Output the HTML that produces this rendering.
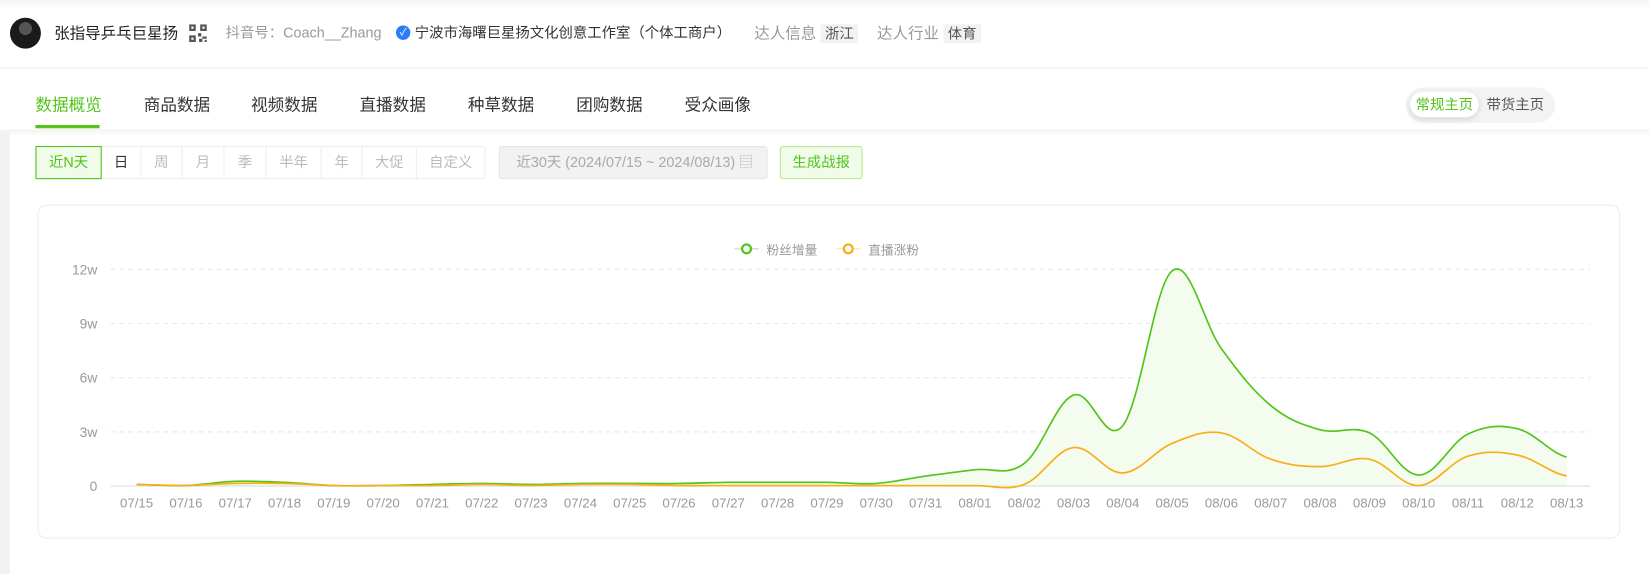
<!DOCTYPE html>
<html><head><meta charset="utf-8">
<style>
*{margin:0;padding:0;box-sizing:border-box}
body{width:1649px;height:540px;background:#fff;font-family:"Liberation Sans","Noto Sans CJK SC",sans-serif;position:relative;overflow:hidden;color:#333}
#w{position:absolute;left:0;top:0;width:1568px;height:514px;transform:scale(1.106);transform-origin:0 0}
.top{position:absolute;left:0;top:0;width:1568px;height:62px;border-bottom:1px solid #eee;background:linear-gradient(#f4f4f4,#fff 8px)}
.avatar{position:absolute;left:9px;top:16px;width:28px;height:28px;border-radius:50%;background:radial-gradient(circle at 50% 35%,#555 0 25%,#1a1a1a 26%);}
.t{position:absolute;top:21px;font-size:14px;line-height:18px;white-space:nowrap}
.tag{background:#f2f2f2;padding:1px 4px;color:#555;font-size:13px}
.tabs{position:absolute;top:84px;font-size:15px;color:#333}
.tabs span{position:absolute;white-space:nowrap}
.ul{position:absolute;left:32px;top:113px;width:58px;height:3px;background:#52c41a}
.sw{position:absolute;left:1271px;top:79px;width:135px;height:32px;border-radius:16px;background:#f2f3f5}
.sw .on{position:absolute;left:4px;top:4px;width:62px;height:23px;border-radius:12px;background:#fff;box-shadow:0 2px 6px rgba(0,0,0,.12);color:#52c41a;font-size:13px;text-align:center;line-height:23px}
.sw .off{position:absolute;left:73px;top:4px;font-size:13px;color:#555;line-height:23px}
.shadow{position:absolute;left:0;top:117px;width:1568px;height:6px;background:linear-gradient(#f3f3f3,#fff)}
.lstrip{position:absolute;left:0;top:119px;width:9px;height:400px;background:#f2f2f2}
.seg{position:absolute;left:32px;top:132px;height:30px;border:1px solid #eee;border-radius:3px;display:flex;font-size:13px;color:#bbb}
.seg div{height:28px;line-height:28px;text-align:center;border-right:1px solid #eee}
.date{position:absolute;left:451px;top:132px;width:243px;height:30px;background:#f2f2f2;border:1px solid #e6e6e6;border-radius:3px;font-size:13px;color:#aaa;line-height:28px;padding-left:15px}
.gen{position:absolute;left:705px;top:132px;width:75px;height:30px;background:#f0fbe9;border:1px solid #b7eb8f;border-radius:3px;color:#52c41a;font-size:13px;line-height:28px;text-align:center}
.card{position:absolute;left:34px;top:185px;width:1431px;height:302px;border:1px solid #eee;border-radius:8px}
svg text{font-family:"Liberation Sans","Noto Sans CJK SC",sans-serif}
</style></head><body>
<div id="w">
<div class="top"></div>
<div class="avatar"></div>
<div class="t" style="left:49px;color:#222">张指导乒乓巨星扬</div>
<svg style="position:absolute;left:171px;top:22px" width="16" height="16" viewBox="0 0 16 16"><g fill="#555"><rect x="0" y="0" width="6" height="6"/><rect x="10" y="0" width="6" height="6"/><rect x="0" y="10" width="6" height="6"/><rect x="8" y="8" width="3" height="3"/><rect x="12" y="11" width="4" height="2"/><rect x="9" y="13" width="3" height="3"/><rect x="14" y="14" width="2" height="2"/></g><g fill="#fff"><rect x="2" y="2" width="2" height="2"/><rect x="12" y="2" width="2" height="2"/><rect x="2" y="12" width="2" height="2"/></g></svg>
<div class="t" style="left:204px;color:#999;font-size:13px">抖音号：Coach__Zhang</div>
<div class="t" style="left:358px;top:23px;width:13px;height:13px;border-radius:50%;background:#2b7cf6;color:#fff;font-size:9px;line-height:13px;text-align:center">✓</div>
<div class="t" style="left:375px;color:#333;font-size:13px">宁波市海曙巨星扬文化创意工作室（个体工商户）</div>
<div class="t" style="left:682px;color:#999">达人信息 <span class="tag">浙江</span></div>
<div class="t" style="left:793px;color:#999">达人行业 <span class="tag">体育</span></div>

<div class="tabs">
<span style="left:32px;color:#52c41a">数据概览</span><span style="left:130px">商品数据</span><span style="left:227px">视频数据</span><span style="left:325px">直播数据</span><span style="left:423px">种草数据</span><span style="left:521px">团购数据</span><span style="left:619px">受众画像</span>
</div>
<div class="ul"></div>
<div class="sw"><div class="on">常规主页</div><div class="off">带货主页</div></div>
<div class="shadow"></div>
<div class="lstrip"></div>

<div class="seg">
<div style="width:60px;background:#f0fbe9;color:#52c41a;border:1px solid #52c41a;margin:-1px 0 -1px -1px;height:30px;line-height:28px">近N天</div>
<div style="width:36px;color:#333">日</div><div style="width:37px">周</div><div style="width:38px">月</div><div style="width:38px">季</div><div style="width:50px">半年</div><div style="width:37px">年</div><div style="width:49px">大促</div><div style="width:61px;border-right:none">自定义</div>
</div>
<div class="date">近30天 (2024/07/15 ~ 2024/08/13)<span style="position:absolute;right:12px;top:0;color:#bbb">▤</span></div>
<div class="gen">生成战报</div>

<div class="card"></div>
<svg id="ch" width="1568" height="514" style="position:absolute;left:0;top:0">
<g stroke="#e8e8e8" stroke-dasharray="4,4">
<line x1="100" x2="1438" y1="243.5" y2="243.5"/><line x1="100" x2="1438" y1="292.5" y2="292.5"/><line x1="100" x2="1438" y1="341.5" y2="341.5"/><line x1="100" x2="1438" y1="390.5" y2="390.5"/>
</g>
<line x1="100" x2="1438" y1="439.5" y2="439.5" stroke="#ddd"/>
<g font-size="12.5" fill="#999" text-anchor="end">
<text x="88" y="248">12w</text><text x="88" y="297">9w</text><text x="88" y="346">6w</text><text x="88" y="395">3w</text><text x="88" y="444">0</text>
</g>
<g id="xl" font-size="12" fill="#999" text-anchor="middle"></g>
<g font-size="11.5" fill="#999">
<line x1="664" x2="686" y1="225" y2="225" stroke="#b7e59a"/><circle cx="675" cy="225" r="4" fill="#fff" stroke="#52c41a" stroke-width="2"/>
<text x="693" y="230">粉丝增量</text>
<line x1="756" x2="778" y1="225" y2="225" stroke="#ffe0a0"/><circle cx="767" cy="225" r="4" fill="#fff" stroke="#faad14" stroke-width="2"/>
<text x="785" y="230">直播涨粉</text>
</g>
<path id="ga" fill="#f4fbef" stroke="none"/>
<path id="g" fill="none" stroke="#52c41a" stroke-width="1.5"/>
<path id="o" fill="none" stroke="#faad14" stroke-width="1.5"/>
</svg>
</div>
<script>
var x0=123.5,dx=(1416.5-123.5)/29,base=439;
function cv(y){return base-(462-y)*(196/206);}
var G=[461,462,458,459,462,462,461,460,461,460,460,460,459,459,459,460,453,447,441,376,405,258,332,386,409,412,452,413,408,435];
var O=[461,462,460,460,462,462,462,461,462,461,461,462,462,462,462,462,462,462,461,426,450,422,412,437,444,437,462,434,433,453];
G=G.map(cv);O=O.map(cv);
var d=["07/15","07/16","07/17","07/18","07/19","07/20","07/21","07/22","07/23","07/24","07/25","07/26","07/27","07/28","07/29","07/30","07/31","08/01","08/02","08/03","08/04","08/05","08/06","08/07","08/08","08/09","08/10","08/11","08/12","08/13"];
function path(Y){var p="M"+x0+","+Y[0].toFixed(1);for(var i=0;i<Y.length-1;i++){var a=Y[Math.max(i-1,0)],b=Y[i],c=Y[i+1],e=Y[Math.min(i+2,Y.length-1)];var xa=x0+i*dx,xb=xa+dx;var k=0.18;p+=" C"+(xa+dx*k*2).toFixed(1)+","+(b+(c-a)*k).toFixed(1)+" "+(xb-dx*k*2).toFixed(1)+","+(c-(e-b)*k).toFixed(1)+" "+xb.toFixed(1)+","+c.toFixed(1);}return p;}
var gp=path(G);
document.getElementById("g").setAttribute("d",gp);
document.getElementById("ga").setAttribute("d",gp+" L1416.5,439 L123.5,439 Z");
document.getElementById("o").setAttribute("d",path(O));
var h="";for(var i=0;i<30;i++){h+='<text x="'+(x0+i*dx).toFixed(1)+'" y="459">'+d[i]+'</text>';}
document.getElementById("xl").innerHTML=h;
</script>
</body></html>
